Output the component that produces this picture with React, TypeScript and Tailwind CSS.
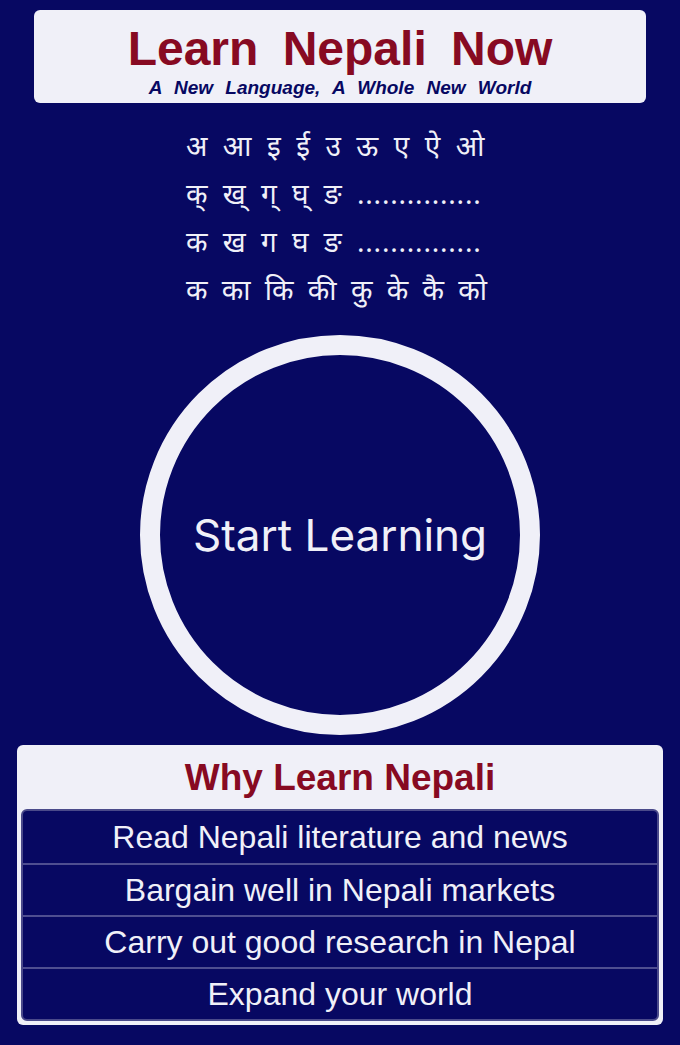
const rows = [
  "Read Nepali literature and news",
  "Bargain well in Nepali markets",
  "Carry out good research in Nepal",
  "Expand your world",
];

const dots = "...............";

export default function App() {
  return (
    <div className="min-h-[1045px] w-[680px] bg-[#070862] pt-[10px] font-['Liberation_Sans',Arial,sans-serif]">
      <div className="mx-[34px] flex h-[93px] flex-col items-center rounded-md bg-[#f0f0f8] pt-[15px]">
        <h1 className="text-[48px] font-bold leading-[48px] text-[#870a22] [word-spacing:11px]">
          Learn Nepali Now
        </h1>
        <p className="mt-[4px] text-[19px] font-bold italic leading-[22px] text-[#070862] [word-spacing:7px]">
          A New Language, A Whole New World
        </p>
      </div>

      <div className="mt-[18px] flex flex-col items-start pl-[186px] font-['Noto_Sans','Noto_Sans_Devanagari',sans-serif] text-[28px] leading-[48px] text-[#f0f0f8]">
        <div className="[word-spacing:8.2px]">अ आ इ ई उ ऊ ए ऐ ओ</div>
        <div className="[word-spacing:8px]">
          क् ख् ग् घ् ङ <span className="tracking-[0.8px]">{dots}</span>
        </div>
        <div className="[word-spacing:8px]">
          क ख ग घ ङ <span className="tracking-[0.8px]">{dots}</span>
        </div>
        <div className="[word-spacing:7px]">क का कि की कु के कै को</div>
      </div>

      <div className="mt-[22px] flex justify-center">
        <button className="flex h-[400px] w-[400px] items-center justify-center rounded-full border-[20px] border-[#f0f0f8] bg-[#070862] font-['Inter',sans-serif] text-[44px] text-[#f0f0f8]">
          Start Learning
        </button>
      </div>

      <div className="mx-[17px] mt-[10px] rounded-md bg-[#f0f0f8] p-[4px]">
        <h2 className="pt-[8px] pb-[10px] text-center text-[37px] font-bold leading-[42px] text-[#870a22]">
          Why Learn Nepali
        </h2>
        <div className="rounded-md border-2 border-[#4a4a8a] bg-[#070862]">
          {rows.map((r, i) => (
            <div
              key={r}
              className={`flex h-[52px] items-center justify-center text-[32px] text-[#f0f0f8] ${
                i > 0 ? "border-t-2 border-[#4e4e90]" : ""
              }`}
            >
              {r}
            </div>
          ))}
        </div>
      </div>
    </div>
  );
}
